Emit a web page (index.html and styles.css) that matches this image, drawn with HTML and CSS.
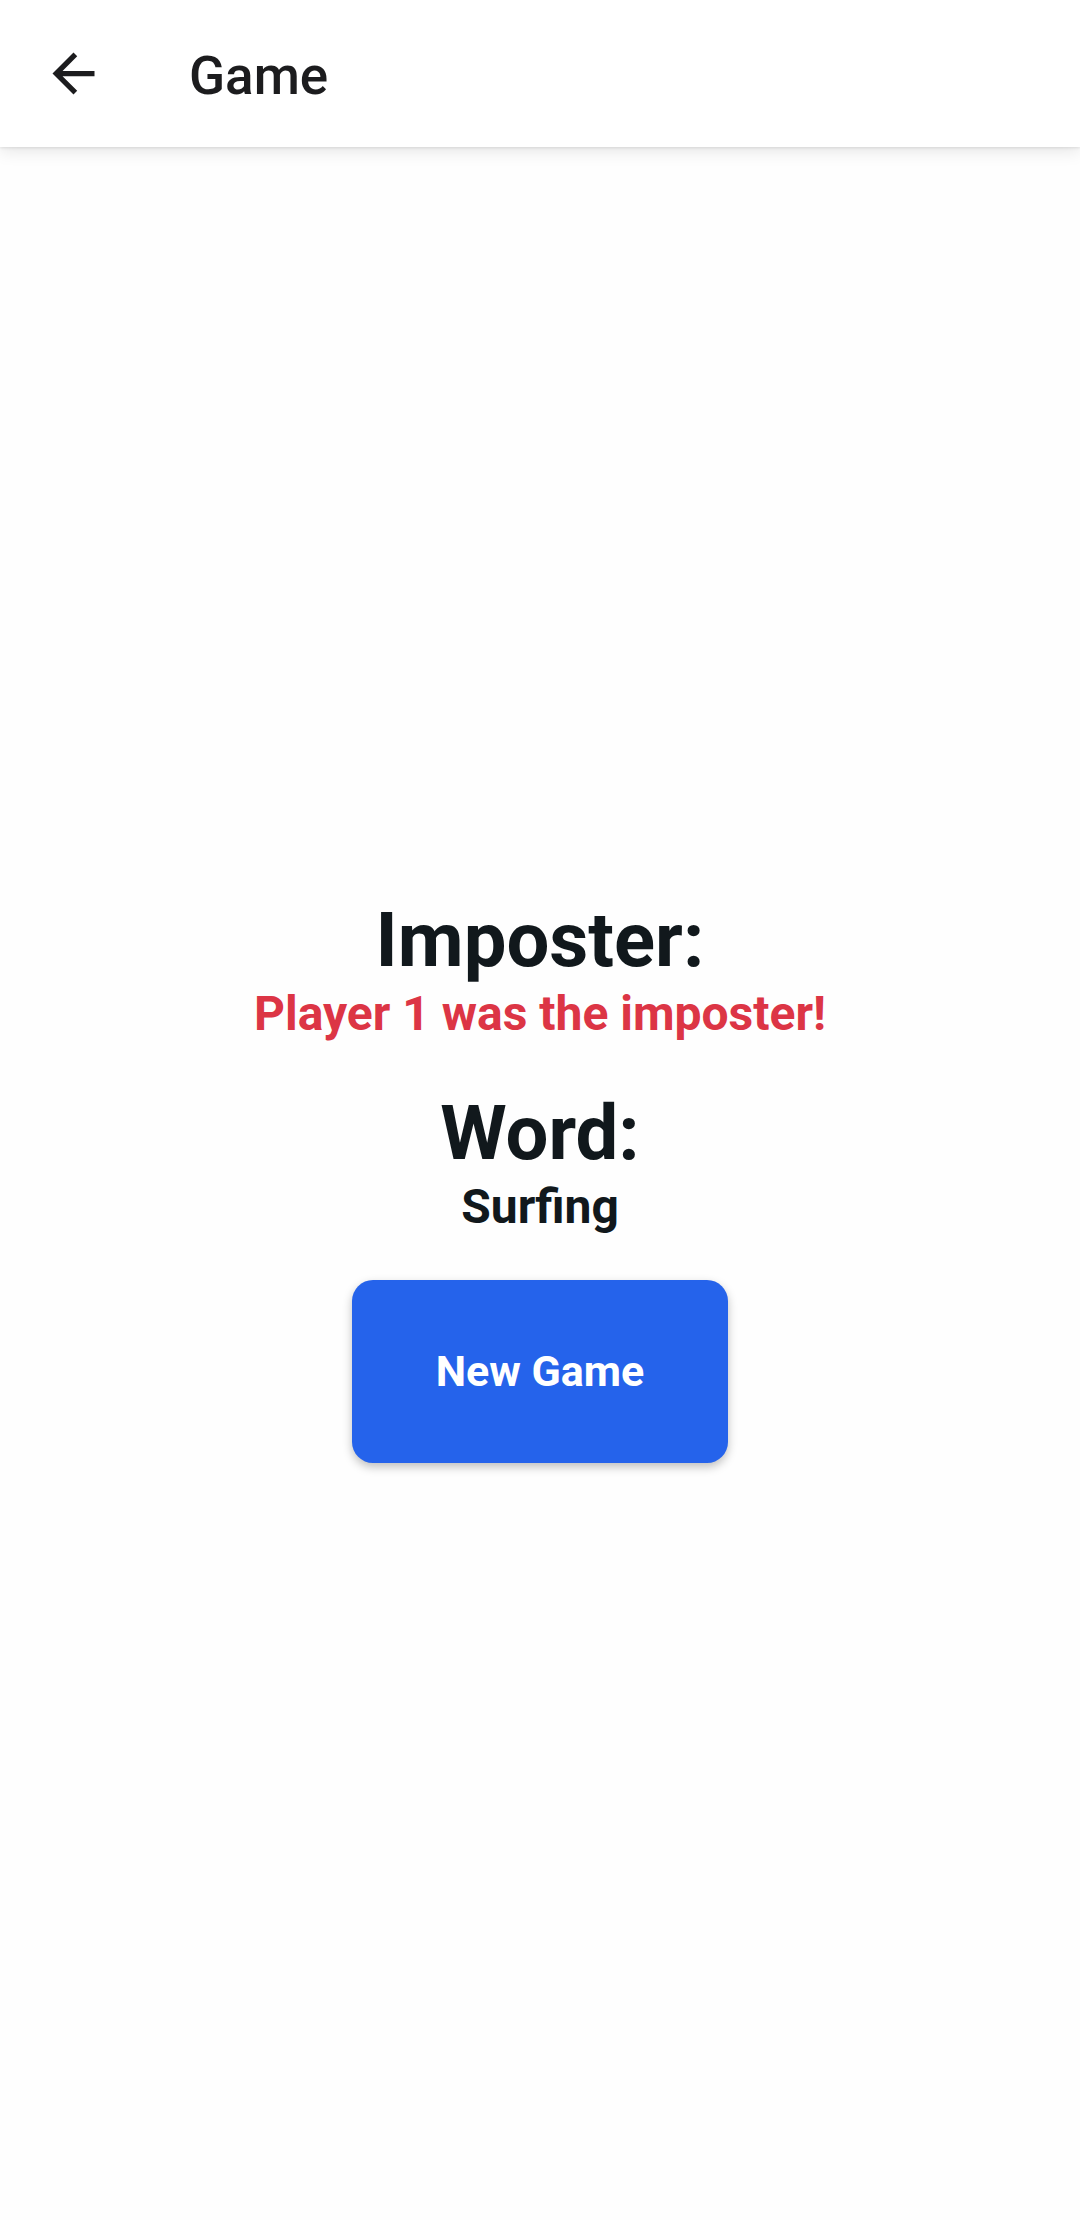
FILE: index.html
```html
<!DOCTYPE html>
<html lang="en">
<head>
<meta charset="utf-8">
<meta name="viewport" content="width=device-width, initial-scale=1">
<title>Game</title>
<link rel="stylesheet" href="styles.css">
</head>
<body>
<header class="app-bar">
  <button class="back" type="button" aria-label="Back">
    <svg class="back-icon" viewBox="0 0 24 24" aria-hidden="true"><path d="M20 11H7.83l5.59-5.59L12 4l-8 8 8 8 1.410-1.410L7.830 13H20z"/></svg>
  </button>
  <h1 class="title">Game</h1>
</header>
<main class="result">
  <div class="answers">
    <section>
      <h2 class="heading">Imposter:</h2>
      <p class="value value-danger">Player 1 was the imposter!</p>
    </section>
    <section>
      <h2 class="heading">Word:</h2>
      <p class="value">Surfing</p>
    </section>
  </div>
  <button class="new-game" type="button">New Game</button>
</main>
</body>
</html>
```

FILE: styles.css
```css
* {
  box-sizing: border-box;
}

body {
  display: flex;
  flex-direction: column;
  min-height: 100vh;
  margin: 0;
  background: #fefefe;
  color: #11181c;
  font-family: Roboto, sans-serif;
}

.app-bar {
  display: flex;
  align-items: center;
  gap: 84px;
  padding: 36px 42px;
  background: #fff;
  box-shadow: 0 1px 3px rgba(0, 0, 0, 0.1), 0 4px 16px rgba(0, 0, 0, 0.1);
}

.back {
  display: flex;
  padding: 0;
  border: 0;
  background: none;
  color: #1c1c1e;
}

.back-icon {
  width: 63px;
  height: 63px;
  fill: currentColor;
}

.title {
  margin: 0;
  padding-top: 5px;
  color: #1c1c1e;
  font-size: 53px;
  font-weight: 500;
  line-height: 70px;
}

.result {
  display: flex;
  flex: 1;
  flex-direction: column;
  align-items: center;
  justify-content: center;
  gap: 42px;
  padding-bottom: 6px;
  text-align: center;
}

.answers {
  display: grid;
  gap: 46px;
}

.heading {
  margin: 0;
  font-size: 76px;
  font-weight: 700;
  line-height: 84px;
}

.value {
  margin: 0;
  font-size: 48px;
  font-weight: 700;
  line-height: 63px;
}

.value-danger {
  color: #dc3545;
}

.new-game {
  padding: 63px 84px;
  border: 0;
  border-radius: 21px;
  background: #2563eb;
  box-shadow: 0 4px 10px rgba(0, 0, 0, 0.25);
  color: #fff;
  font: 700 43px/57px Roboto, sans-serif;
}
```
